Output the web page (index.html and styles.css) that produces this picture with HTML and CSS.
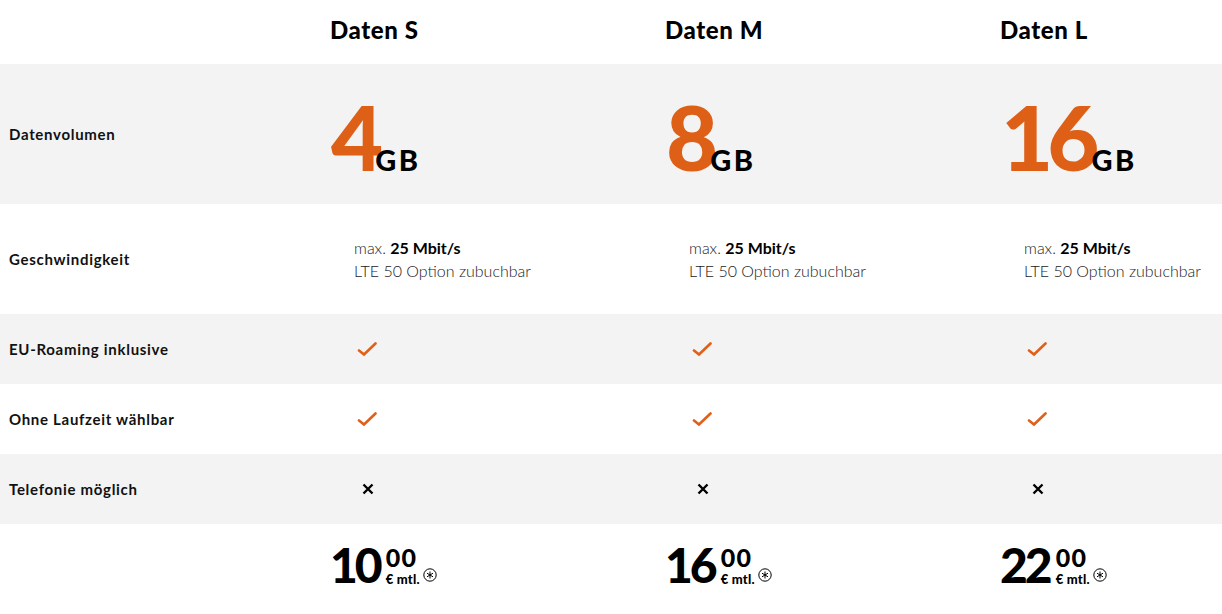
FILE: index.html
```html
<!DOCTYPE html>
<html lang="de">
<head>
<meta charset="utf-8">
<link rel="stylesheet" href="styles.css">
</head>
<body>
<div class="table">
  <div class="row head">
    <div class="label"></div>
    <div class="cell"><h2 class="title">Daten S</h2></div>
    <div class="cell"><h2 class="title">Daten M</h2></div>
    <div class="cell"><h2 class="title">Daten L</h2></div>
  </div>
  <div class="row gray volume">
    <div class="label">Datenvolumen</div>
    <div class="cell"><span class="big">4</span><span class="unit">GB</span></div>
    <div class="cell"><span class="big">8</span><span class="unit">GB</span></div>
    <div class="cell"><span class="big">16</span><span class="unit">GB</span></div>
  </div>
  <div class="row speed">
    <div class="label">Geschwindigkeit</div>
    <div class="cell"><div class="sp"><div>max. <b>25 Mbit/s</b></div><div>LTE 50 Option zubuchbar</div></div></div>
    <div class="cell"><div class="sp"><div>max. <b>25 Mbit/s</b></div><div>LTE 50 Option zubuchbar</div></div></div>
    <div class="cell"><div class="sp"><div>max. <b>25 Mbit/s</b></div><div>LTE 50 Option zubuchbar</div></div></div>
  </div>
  <div class="row gray small">
    <div class="label">EU-Roaming inklusive</div>
    <div class="cell"><svg class="check" viewBox="0 0 20 16"><path d="M2 9.5 L7 13.5 L18.5 2.5"/></svg></div>
    <div class="cell"><svg class="check" viewBox="0 0 20 16"><path d="M2 9.5 L7 13.5 L18.5 2.5"/></svg></div>
    <div class="cell"><svg class="check" viewBox="0 0 20 16"><path d="M2 9.5 L7 13.5 L18.5 2.5"/></svg></div>
  </div>
  <div class="row small">
    <div class="label">Ohne Laufzeit wählbar</div>
    <div class="cell"><svg class="check" viewBox="0 0 20 16"><path d="M2 9.5 L7 13.5 L18.5 2.5"/></svg></div>
    <div class="cell"><svg class="check" viewBox="0 0 20 16"><path d="M2 9.5 L7 13.5 L18.5 2.5"/></svg></div>
    <div class="cell"><svg class="check" viewBox="0 0 20 16"><path d="M2 9.5 L7 13.5 L18.5 2.5"/></svg></div>
  </div>
  <div class="row gray small">
    <div class="label">Telefonie möglich</div>
    <div class="cell"><svg class="cross" viewBox="0 0 12 12"><path d="M1.5 1.5 L10.5 10.5 M10.5 1.5 L1.5 10.5"/></svg></div>
    <div class="cell"><svg class="cross" viewBox="0 0 12 12"><path d="M1.5 1.5 L10.5 10.5 M10.5 1.5 L1.5 10.5"/></svg></div>
    <div class="cell"><svg class="cross" viewBox="0 0 12 12"><path d="M1.5 1.5 L10.5 10.5 M10.5 1.5 L1.5 10.5"/></svg></div>
  </div>
  <div class="row price">
    <div class="label"></div>
    <div class="cell"><div class="pr"><span class="euro">10</span><span class="pside"><span class="cent">00</span><span class="mtl">€ mtl.<svg class="star" viewBox="0 0 14 14"><circle cx="7" cy="7" r="6.2"/><path d="M7 3.5 V10.5 M4 5.2 L10 8.8 M10 5.2 L4 8.8"/></svg></span></span></div></div>
    <div class="cell"><div class="pr"><span class="euro">16</span><span class="pside"><span class="cent">00</span><span class="mtl">€ mtl.<svg class="star" viewBox="0 0 14 14"><circle cx="7" cy="7" r="6.2"/><path d="M7 3.5 V10.5 M4 5.2 L10 8.8 M10 5.2 L4 8.8"/></svg></span></span></div></div>
    <div class="cell"><div class="pr"><span class="euro">22</span><span class="pside"><span class="cent">00</span><span class="mtl">€ mtl.<svg class="star" viewBox="0 0 14 14"><circle cx="7" cy="7" r="6.2"/><path d="M7 3.5 V10.5 M4 5.2 L10 8.8 M10 5.2 L4 8.8"/></svg></span></span></div></div>
  </div>
</div>
</body>
</html>
```
FILE: styles.css
```css
html, body {
  margin: 0;
  padding: 0;
  background: #fff;
  overflow: hidden;
}
body {
  font-family: "Lato", "Open Sans", sans-serif;
  color: #000;
  width: 1222px;
  height: 614px;
}
.table {
  display: flex;
  flex-direction: column;
  width: 1222px;
}
.row {
  display: grid;
  grid-template-columns: 330px 335px 335px 222px;
  align-items: center;
}
.gray { background: #f3f3f3; }
.head { height: 64px; }
.volume { height: 140px; }
.speed { height: 110px; }
.small { height: 70px; }
.price { height: 90px; }
.label {
  padding-left: 9px;
  font-size: 15px;
  font-weight: 700;
  letter-spacing: 0.7px;
  color: #111;
}
.cell {
  display: flex;
  align-items: center;
}
.head .cell { padding-bottom: 6px; }
.title {
  margin: 0;
  font-size: 24px;
  font-weight: 900;
  letter-spacing: 0.6px;
  color: #000;
}
.volume .cell {
  align-items: baseline;
  padding-left: 1px;
  padding-top: 4px;
}
.big {
  font-size: 90px;
  font-weight: 900;
  color: #de5f16;
  line-height: 1;
  letter-spacing: -6px;
}
.unit {
  font-size: 29px;
  font-weight: 900;
  letter-spacing: 2.5px;
  margin-left: -2px;
  line-height: 1;
}
.sp {
  padding-left: 24px;
  font-size: 16px;
  line-height: 23px;
  color: #1a1a1a;
  font-weight: 300;
}
.sp b { font-weight: 700; color: #000; }
.check {
  width: 20px;
  height: 16px;
  margin-left: 27px;
  fill: none;
  stroke: #e0601a;
  stroke-width: 2.6;
  stroke-linejoin: miter;
  stroke-linecap: round;
}
.cross {
  width: 12px;
  height: 12px;
  margin-left: 32px;
  stroke: #000;
  stroke-width: 2.4;
  fill: none;
}
.pr {
  display: flex;
  align-items: flex-start;
  margin-top: -8px;
}
.euro {
  font-size: 48px;
  font-weight: 900;
  line-height: 1;
  letter-spacing: -3px;
}
.pside {
  display: flex;
  flex-direction: column;
  margin-left: 6px;
  margin-top: 1px;
}
.cent {
  font-size: 25px;
  font-weight: 900;
  line-height: normal;
  letter-spacing: 1.2px;
}
.mtl {
  display: flex;
  align-items: center;
  font-size: 13px;
  font-weight: 900;
  line-height: normal;
  letter-spacing: 0.2px;
  margin-top: -1px;
}
.star {
  width: 14px;
  height: 14px;
  margin-left: 3px;
  margin-top: -8px;
  fill: none;
  stroke: #000;
  stroke-width: 1;
}
```
